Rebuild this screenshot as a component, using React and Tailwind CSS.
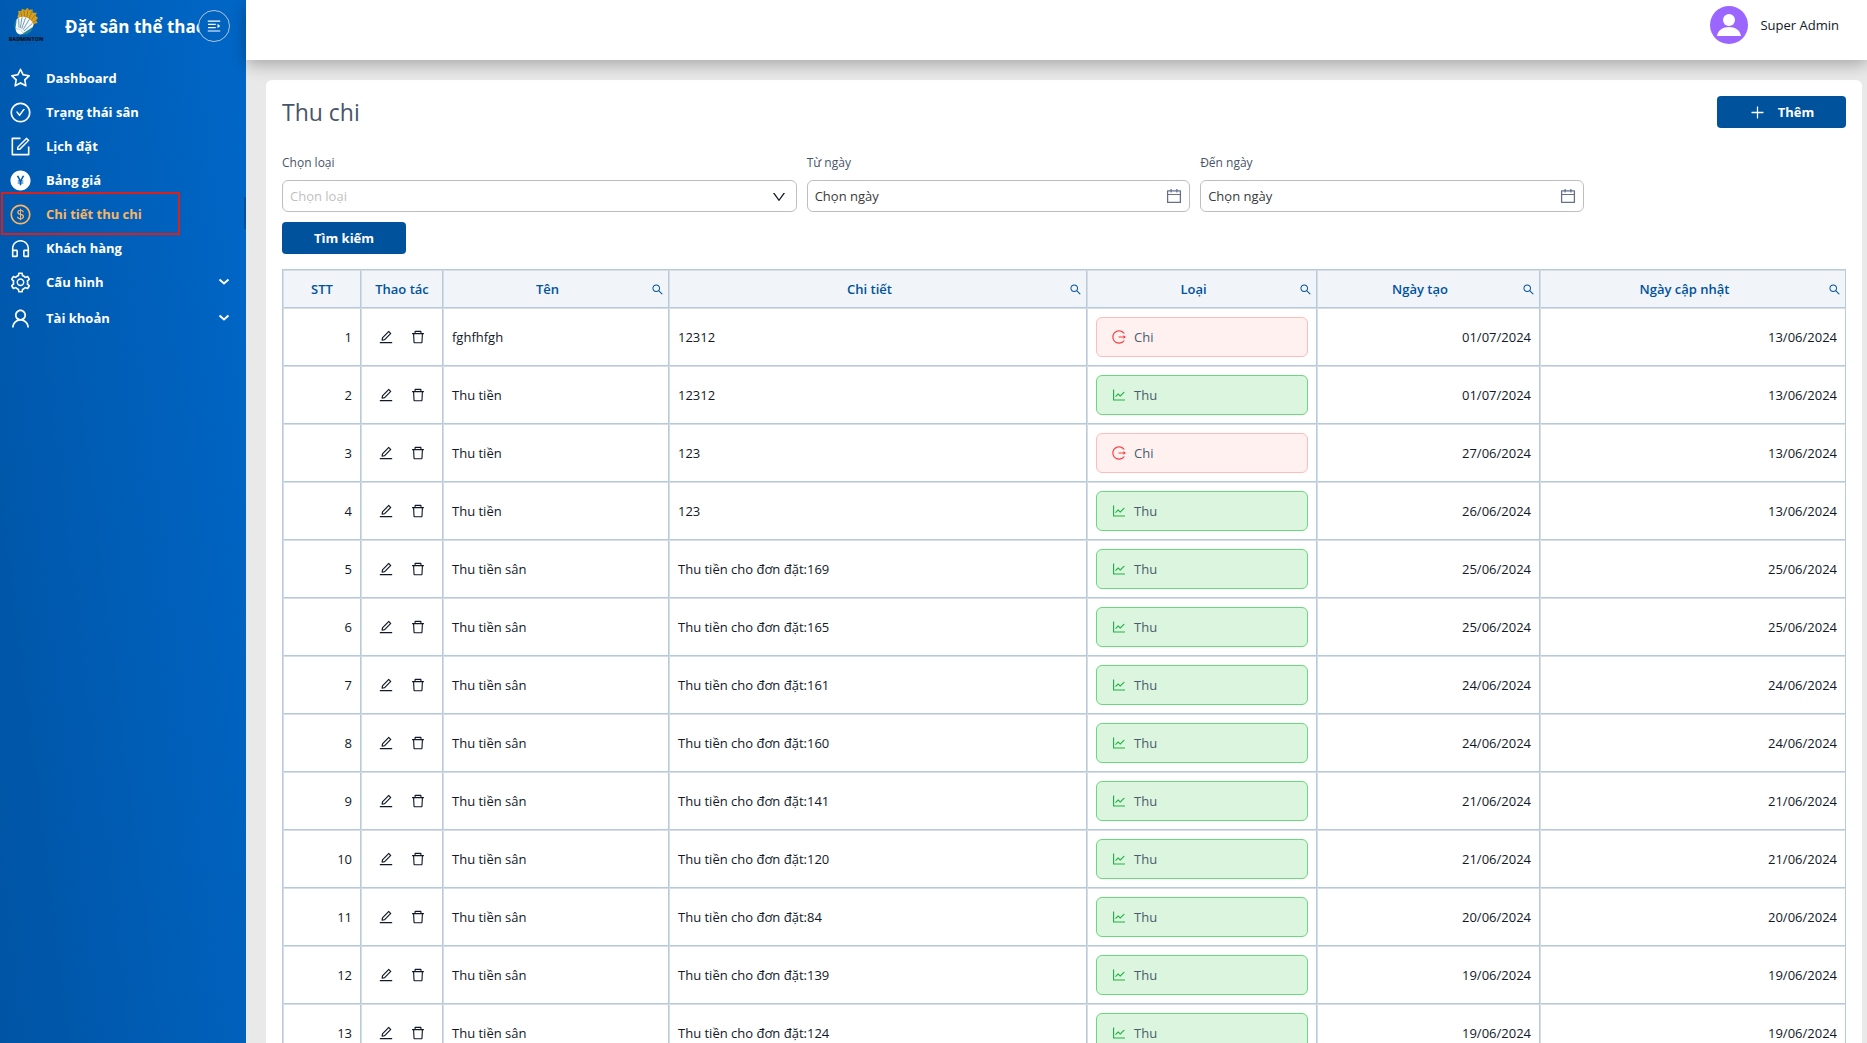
import {
  AiOutlineStar, AiOutlineCheckCircle, AiOutlineForm, AiFillPayCircle, AiOutlineDollar,
  AiOutlineCustomerService, AiOutlineSetting, AiOutlineUser, AiOutlineMenuFold, AiOutlineEdit,
  AiOutlineDelete, AiOutlineSearch, AiOutlineCalendar, AiOutlineLogout, AiOutlineLineChart,
  AiOutlineDown, AiOutlinePlus,
} from "react-icons/ai";

const menu = [
  { label: "Dashboard", Icon: AiOutlineStar },
  { label: "Trạng thái sân", Icon: AiOutlineCheckCircle },
  { label: "Lịch đặt", Icon: AiOutlineForm },
  { label: "Bảng giá", Icon: AiFillPayCircle },
  { label: "Chi tiết thu chi", Icon: AiOutlineDollar, active: true },
  { label: "Khách hàng", Icon: AiOutlineCustomerService },
  { label: "Cấu hình", Icon: AiOutlineSetting, sub: true },
  { label: "Tài khoản", Icon: AiOutlineUser, sub: true },
];

const columns = [
  { label: "STT", width: "w-[78px]" },
  { label: "Thao tác", width: "w-[82px]" },
  { label: "Tên", width: "w-[226px]", search: true },
  { label: "Chi tiết", width: "w-[418px]", search: true },
  { label: "Loại", width: "w-[230px]", search: true },
  { label: "Ngày tạo", width: "w-[223px]", search: true },
  { label: "Ngày cập nhật", width: "w-[306px]", search: true },
];

const rows = [
  ["fghfhfgh", "12312", "Chi", "01/07/2024", "13/06/2024"],
  ["Thu tiền", "12312", "Thu", "01/07/2024", "13/06/2024"],
  ["Thu tiền", "123", "Chi", "27/06/2024", "13/06/2024"],
  ["Thu tiền", "123", "Thu", "26/06/2024", "13/06/2024"],
  ["Thu tiền sân", "Thu tiền cho đơn đặt:169", "Thu", "25/06/2024", "25/06/2024"],
  ["Thu tiền sân", "Thu tiền cho đơn đặt:165", "Thu", "25/06/2024", "25/06/2024"],
  ["Thu tiền sân", "Thu tiền cho đơn đặt:161", "Thu", "24/06/2024", "24/06/2024"],
  ["Thu tiền sân", "Thu tiền cho đơn đặt:160", "Thu", "24/06/2024", "24/06/2024"],
  ["Thu tiền sân", "Thu tiền cho đơn đặt:141", "Thu", "21/06/2024", "21/06/2024"],
  ["Thu tiền sân", "Thu tiền cho đơn đặt:120", "Thu", "21/06/2024", "21/06/2024"],
  ["Thu tiền sân", "Thu tiền cho đơn đặt:84", "Thu", "20/06/2024", "20/06/2024"],
  ["Thu tiền sân", "Thu tiền cho đơn đặt:139", "Thu", "19/06/2024", "19/06/2024"],
  ["Thu tiền sân", "Thu tiền cho đơn đặt:124", "Thu", "19/06/2024", "19/06/2024"],
];

const cell = "border border-l-[#d9dde2] border-t-[#d9dde2] border-r-[#b3cadf] border-b-[#b3cadf] px-2";

function Logo() {
  return (
    <svg viewBox="24 18 108 120" className="h-10 w-9 shrink-0" role="img" aria-label="Badminton">
      <circle cx="71" cy="76" r="28" fill="#23869c" />
      <path d="M52 52 L56 40 L54 32 L64 34 L66 26 L76 30 L82 23 L88 30 L98 28 L98 38 L110 38 L107 48 L114 54 L108 61 L113 69 L103 71 L100 77 L88 74 Z" fill="#d6a01e" />
      <path d="M62 36 L68 58 M72 30 L74 56 M84 28 L80 56 M96 32 L86 60 M106 44 L90 66 M110 60 L92 72" stroke="#8a6a1c" strokeWidth="2" />
      <path d="M47 84 L50 58 L60 51 L72 50 L84 54 L94 62 L100 72 L99 80 L72 98 Z" fill="#f4f8fb" />
      <path d="M56 56 L57 84 M66 52 L61 84 M77 53 L65 86 M88 58 L69 89 M97 70 L72 93" stroke="#34708a" strokeWidth="2" />
      <path d="M47 82 Q60 80 72 98 Q66 105 57 103 Q46 98 47 82 Z" fill="#ffffff" />
      <path d="M48 86 Q61 84 70 99" stroke="#9db6c4" strokeWidth="2" fill="none" />
      <text x="78" y="123" textAnchor="middle" fontSize="16" fontWeight="800" fill="#0a1626" fontFamily="Open Sans, sans-serif">BADMINTON</text>
      <path d="M51 130 H106" stroke="#0f4d8c" strokeWidth="3" strokeDasharray="5 3" />
    </svg>
  );
}

function MenuItem({ label, Icon, active, sub, spaced }) {
  return (
    <li className={spaced ? "mt-0.5" : ""}>
      <a href="#" aria-current={active ? "page" : undefined}
        className={`relative flex h-[34px] items-center gap-3.5 pl-[9px] pr-3.5 text-[13px] font-bold ${active ? "text-[#f9b563]" : "text-white"}`}>
        <Icon className="size-[23px]" />
        <span className="flex-1 pt-0.5">{label}</span>
        {sub && (
          <svg viewBox="0 0 16 16" className="size-4" fill="none" stroke="currentColor" strokeWidth="2"><path d="M3.500 5.500l4.500 4 4.500-4" /></svg>
        )}
        {active && <span className="absolute right-0 top-0 h-8 w-0.5 bg-[#00509a]" />}
        {active && <span className="absolute -top-[5px] left-px h-[43px] w-[179px] border-2 border-[#d8201f]" />}
      </a>
    </li>
  );
}

function DateField({ id, label }) {
  return (
    <div className="col-span-3">
      <label htmlFor={id} className="block pt-px text-xs leading-4 text-[#475569]">{label}</label>
      <div className="mt-[9px] flex h-8 items-center rounded-md border border-[#bcbec3] px-[7px]">
        <input id={id} placeholder="Chọn ngày" className="min-w-0 flex-1 pt-0.5 text-[13px] text-[#333] outline-none placeholder:text-[#3a3a3a]" />
        <AiOutlineCalendar className="-mr-px size-[18px] text-[#64708b]" />
      </div>
    </div>
  );
}

function Tag({ type }) {
  const out = type === "Chi";
  const Icon = out ? AiOutlineLogout : AiOutlineLineChart;
  return (
    <div className={`flex h-10 items-center gap-[7px] rounded-md border px-3.5 ${out ? "border-[#ffbcb8] bg-[#fff1f0]" : "border-[#69d97c] bg-[#dcf5df]"}`}>
      <Icon className={`size-4 ${out ? "text-[#f5403f]" : "text-[#1fb141]"}`} />
      <span className="pt-0.5 text-[#4b5b6e]">{type}</span>
    </div>
  );
}

export default function App() {
  return (
    <div className="flex h-screen overflow-hidden bg-[#e9e9e9] font-['Open_Sans','Noto_Sans',sans-serif] text-[13px] text-[#111827]">
      <aside className="w-[246px] shrink-0 bg-[linear-gradient(83deg,#0054a4,#0067c8)]">
        <div className="relative flex h-[52px] items-center overflow-hidden pl-2">
          <Logo />
          <span className="ml-[21px] w-[135px] overflow-hidden whitespace-nowrap pt-0.5 text-[17px] font-bold text-white">Đặt sân thể thao</span>
          <button aria-label="Thu gọn menu" className="absolute right-4 top-2.5 flex size-8 items-center justify-center rounded-full border border-[#b3c5da] bg-[#0063c0] text-white">
            <AiOutlineMenuFold className="size-4 rotate-180" />
          </button>
        </div>
        <nav className="pt-[9px]">
          <ul>{menu.map((m, i) => <MenuItem key={m.label} {...m} spaced={i === menu.length - 1} />)}</ul>
        </nav>
      </aside>
      <div className="flex min-w-0 flex-1 flex-col">
        <header className="relative flex h-[60px] shrink-0 items-center justify-end gap-3 bg-white pb-2.5 pr-7 shadow-[0_4px_16px_rgba(0,0,0,0.3)]">
          <svg viewBox="0 0 38 38" className="size-[38px]" aria-hidden="true">
            <circle cx="19" cy="19" r="19" fill="#9b66ff" />
            <circle cx="19" cy="14" r="6" fill="#fff" />
            <path d="M7 30 C8 24 13 21 19 21 C25 21 30 24 31 30 Z" fill="#fff" />
          </svg>
          <span className="pt-0.5">Super Admin</span>
        </header>
        <main className="min-h-0 flex-1 overflow-hidden pl-5 pr-[5px] pt-5">
          <section className="rounded-md bg-white p-4">
            <div className="flex items-start justify-between">
              <h1 className="text-[23px] font-medium leading-8 text-[#475569]">Thu chi</h1>
              <button className="flex h-8 w-[129px] items-center justify-center gap-3 rounded bg-[#00529c] font-bold text-white">
                <AiOutlinePlus className="size-[17px]" /><span className="pt-0.5">Thêm</span>
              </button>
            </div>
            <div className="mt-[26px] grid grid-cols-12 gap-x-2.5">
              <div className="col-span-4">
                <label htmlFor="type" className="block pt-px text-xs leading-4 text-[#475569]">Chọn loại</label>
                <div className="relative mt-[9px]">
                  <select id="type" defaultValue="" className="block h-8 w-full appearance-none rounded-md border border-[#bcbec3] bg-white px-[7px] pt-0.5 text-[13px] text-[#bfbfbf] outline-none">
                    <option value="">Chọn loại</option>
                    <option>Thu</option>
                    <option>Chi</option>
                  </select>
                  <AiOutlineDown className="pointer-events-none absolute right-2.5 top-[9px] size-4 text-[#111827]" />
                </div>
              </div>
              <DateField id="from" label="Từ ngày" />
              <DateField id="to" label="Đến ngày" />
            </div>
            <button className="mt-2.5 h-8 w-[124px] rounded bg-[#00529c] pt-0.5 font-bold text-white">Tìm kiếm</button>
            <table className="mt-[15px] w-full table-fixed border-separate border-spacing-0 border-l border-t border-[#b3cadf]">
              <thead>
                <tr className="h-[38px] bg-[#f1f5fa] text-[#00529c]">
                  {columns.map((c) => (
                    <th key={c.label} scope="col" className={`${cell} ${c.width} font-semibold`}>
                      <div className="flex items-center">
                        <span className={`flex-1 whitespace-nowrap pt-0.5 ${c.search ? "pr-2" : ""}`}>{c.label}</span>
                        {c.search && <button aria-label={`Tìm ${c.label}`} className="-mr-1"><AiOutlineSearch className="size-[13px]" /></button>}
                      </div>
                    </th>
                  ))}
                </tr>
              </thead>
              <tbody>
                {rows.map(([name, detail, type, created, updated], i) => (
                  <tr key={i} className="h-[58px]">
                    <td className={`${cell} pt-0.5 text-right`}>{i + 1}</td>
                    <td className={cell}>
                      <div className="flex items-center justify-center gap-4">
                        <button aria-label="Sửa"><AiOutlineEdit className="size-4" /></button>
                        <button aria-label="Xóa"><AiOutlineDelete className="size-4" /></button>
                      </div>
                    </td>
                    <td className={`${cell} pt-0.5`}>{name}</td>
                    <td className={`${cell} pt-0.5`}>{detail}</td>
                    <td className={cell}><Tag type={type} /></td>
                    <td className={`${cell} pt-0.5 text-right`}>{created}</td>
                    <td className={`${cell} pt-0.5 text-right`}>{updated}</td>
                  </tr>
                ))}
              </tbody>
            </table>
          </section>
        </main>
      </div>
    </div>
  );
}
